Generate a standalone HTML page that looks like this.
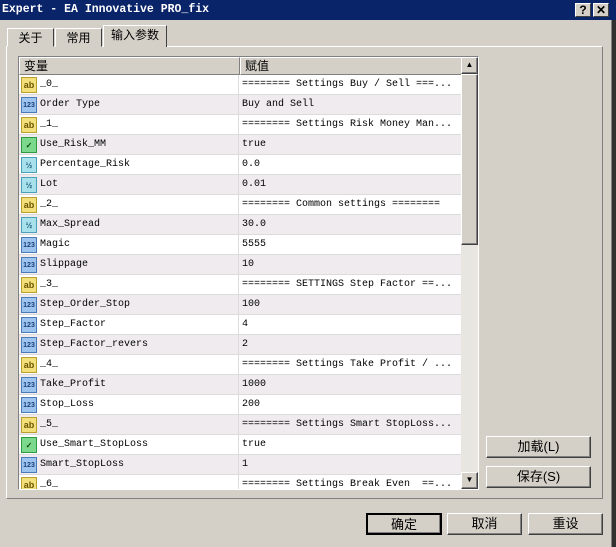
<!DOCTYPE html><html><head><style>
*{margin:0;padding:0;box-sizing:border-box}
body{width:616px;height:547px;background:#d4d0c8;position:relative;overflow:hidden;font-family:"Liberation Mono",monospace;font-size:10px}
.abs{position:absolute}
.title{left:0;top:0;width:616px;height:20px;background:#0a246a;color:#fff;font-weight:bold;font-size:11.5px;line-height:20px;padding-left:2px}
.tb{width:16px;height:14px;top:3px;background:#d4d0c8;border:1px solid;border-color:#fff #404040 #404040 #fff;color:#000;font:bold 12px "Liberation Sans",sans-serif;text-align:center;line-height:12px}
.tab{top:28px;height:19px;border:1px solid;border-color:#fff #404040 transparent #fff;font:12px "Liberation Sans","Noto Sans CJK SC",sans-serif;line-height:18px;text-align:center;background:#d4d0c8}
.panel{left:6px;top:46px;width:597px;height:453px;border:1px solid;border-color:#fff #808080 #808080 #fff}
.list{left:18px;top:56px;width:461px;height:434px;border:1px solid;border-color:#808080 #fff #fff #808080;background:#fff;overflow:hidden}
.hdr{left:0;top:0;height:18px;background:#d4d0c8;border:1px solid;border-color:#fff #808080 #808080 #fff;font:12px "Liberation Sans","Noto Sans CJK SC",sans-serif;line-height:16px;padding-left:4px}
.row{position:absolute;left:0;width:442px;height:20px;border-bottom:1px solid #dcdcdc;line-height:20px;white-space:nowrap;font-size:10px}
.row.g{background:#efebef}
.row .n{position:absolute;left:21px}
.row .v{position:absolute;left:223px;width:218px;overflow:hidden}
.row .sep{position:absolute;left:219px;top:0;width:1px;height:20px;background:#dcdcdc}
.ic{position:absolute;left:2px;top:2px;width:16px;height:16px;font:bold 8px "Liberation Sans",sans-serif;text-align:center;line-height:15px;border:1px solid}
.ab{background:#f3e07a;border-color:#b8a030;color:#6a5500;font-size:9px}
.i123{background:#9cc4ee;border-color:#4a7ab8;color:#1a3e7a;font-size:7px}
.v2{background:#a8e0ec;border-color:#4aa0b8;color:#1a5a7a}
.bl{background:#7cd88c;border-color:#2e9a40;color:#0a4a10}
.btn{height:22px;background:#d4d0c8;border:1px solid;border-color:#fff #404040 #404040 #fff;box-shadow:inset -1px -1px #808080;font:13px "Liberation Sans","Noto Sans CJK SC",sans-serif;text-align:center;line-height:20px}
</style></head><body>
<div class="abs title">Expert - EA Innovative PRO_fix</div>
<div class="abs tb" style="left:575px">?</div>
<div class="abs tb" style="left:593px">✕</div>
<div class="abs panel"></div>
<div class="abs tab" style="left:7px;width:47px">关于</div>
<div class="abs tab" style="left:55px;width:47px">常用</div>
<div class="abs tab" style="left:103px;top:25px;height:22px;width:64px;border-bottom:none">输入参数</div>
<div class="abs list">
<div class="abs hdr" style="width:221px">变量</div>
<div class="abs hdr" style="left:221px;width:222px">赋值</div>
<div id="rows"></div>
<div class="abs" style="left:442px;top:0;width:17px;height:432px;background:#e8e6e0"></div>
<div class="abs btn" style="left:442px;top:0;width:17px;height:17px;font-size:8px;line-height:14px">▲</div>
<div class="abs btn" style="left:442px;top:17px;width:17px;height:171px"></div>
<div class="abs btn" style="left:442px;top:415px;width:17px;height:17px;font-size:8px;line-height:14px">▼</div>
</div>
<div class="abs btn" style="left:486px;top:436px;width:105px">加载(L)</div>
<div class="abs btn" style="left:486px;top:466px;width:105px">保存(S)</div>
<div class="abs btn" style="left:366px;top:513px;width:76px;border:2px solid #000">确定</div>
<div class="abs btn" style="left:447px;top:513px;width:75px">取消</div>
<div class="abs btn" style="left:528px;top:513px;width:75px">重设</div>
<div class="abs" style="left:611px;top:20px;width:1px;height:527px;background:#808080"></div>
<div class="abs" style="left:612px;top:20px;width:4px;height:527px;background:#303030"></div>
<script>
var d=[["ab","_0_","======== Settings Buy / Sell ===..."],["i123","Order Type","Buy and Sell"],["ab","_1_","======== Settings Risk Money Man..."],["bl","Use_Risk_MM","true"],["v2","Percentage_Risk","0.0"],["v2","Lot","0.01"],["ab","_2_","======== Common settings ========"],["v2","Max_Spread","30.0"],["i123","Magic","5555"],["i123","Slippage","10"],["ab","_3_","======== SETTINGS Step Factor ==..."],["i123","Step_Order_Stop","100"],["i123","Step_Factor","4"],["i123","Step_Factor_revers","2"],["ab","_4_","======== Settings Take Profit / ..."],["i123","Take_Profit","1000"],["i123","Stop_Loss","200"],["ab","_5_","======== Settings Smart StopLoss..."],["bl","Use_Smart_StopLoss","true"],["i123","Smart_StopLoss","1"],["ab","_6_","======== Settings Break Even  ==..."]];
var lab={ab:"ab",i123:"123",v2:"½",bl:"✓"},h="";
d.forEach(function(r,i){h+='<div class="row'+(i%2?' g':'')+'" style="top:'+(18+i*20)+'px"><div class="ic '+r[0]+'">'+lab[r[0]]+'</div><span class="n">'+r[1]+'</span><div class="sep"></div><span class="v">'+r[2].replace(/ /g,"&nbsp;")+'</span></div>';});
document.getElementById("rows").innerHTML=h;
</script>
</body></html>
